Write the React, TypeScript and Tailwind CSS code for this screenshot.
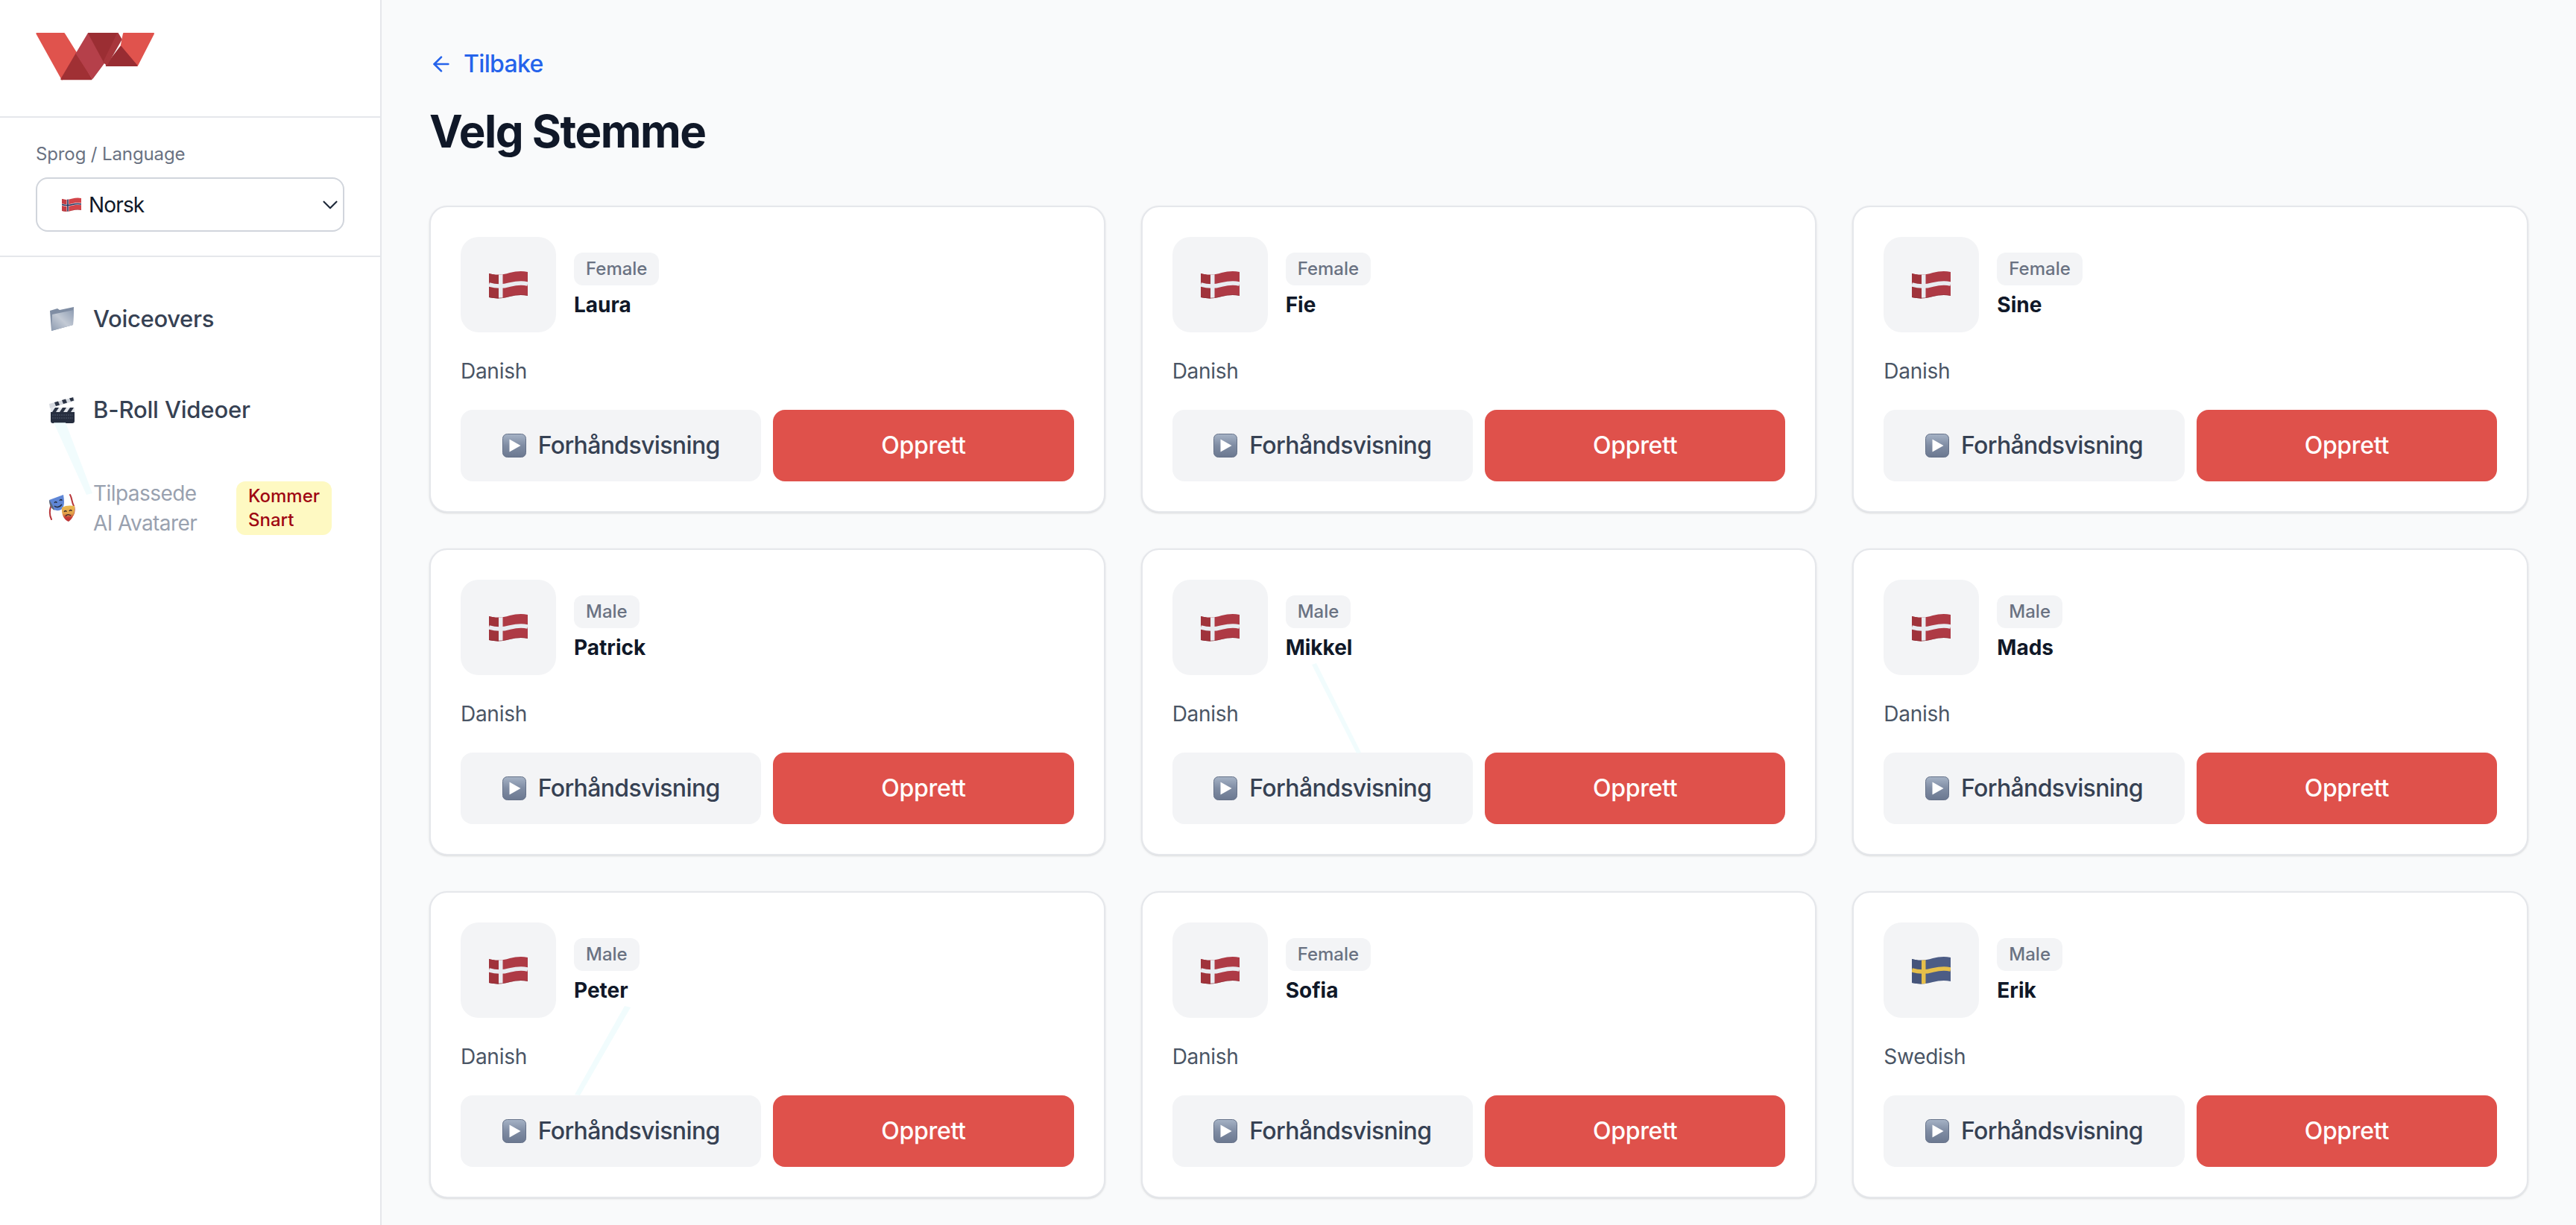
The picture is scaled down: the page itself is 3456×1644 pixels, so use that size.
import React from "react";
import { ArrowLeft, ChevronDown } from "lucide-react";

const FLAG_TOP = "M0 4C10 7 18 6 28 3C36 1 44 0 52 2L52 34C44 32 36 33 28 35C18 38 10 38 0 36Z";
const H_BAR = "M0 19C10 22 18 22 28 19C36 17 44 16 52 18";

function WaveFlag({ kind, className }: { kind: "dk" | "se" | "no"; className: string }) {
  const id = "flag-clip-" + kind;
  const bg = kind === "se" ? "#4c5c85" : kind === "dk" ? "#ae3a45" : "#d3454a";
  const cross = kind === "se" ? "#e6bf4a" : "#e9ebf0";
  return (
    <svg viewBox="0 0 52 38" className={className}>
      <defs>
        <clipPath id={id}>
          <path d={FLAG_TOP} />
        </clipPath>
      </defs>
      <g clipPath={`url(#${id})`}>
        <rect width="52" height="38" fill={bg} />
        <rect x="0" y="0" width="13" height="38" fill={kind === "se" ? "#46557a" : kind === "dk" ? "#a0333b" : "#c53e44"} />
        <rect x="13" y="0" width="5.5" height="38" fill={cross} />
        <path d={H_BAR} stroke={cross} strokeWidth="5.5" fill="none" />
        {kind === "no" && (
          <>
            <rect x="14.3" y="0" width="3" height="38" fill="#26335c" />
            <path d={H_BAR} stroke="#26335c" strokeWidth="3" fill="none" />
          </>
        )}
        <path d="M0 36C10 38 18 38 28 35C36 33 44 32 52 34" stroke="#7c2730" strokeOpacity={kind === "se" ? 0 : 0.5} strokeWidth="1.5" fill="none" />
      </g>
    </svg>
  );
}

function PlayIcon() {
  return (
    <svg viewBox="0 0 32 32" className="h-8 w-8 shrink-0">
      <defs>
        <linearGradient id="play-grad" x1="0" y1="0" x2="0" y2="1">
          <stop offset="0" stopColor="#a6b3c6" />
          <stop offset="0.5" stopColor="#7f8ca3" />
          <stop offset="1" stopColor="#6b7890" />
        </linearGradient>
      </defs>
      <rect x="0.5" y="0.5" width="31" height="31" rx="6" fill="url(#play-grad)" stroke="#667289" />
      <path d="M9.5 7.5L24.5 16L9.5 24.5Z" fill="#ffffff" />
    </svg>
  );
}

function FolderIcon() {
  return (
    <svg viewBox="0 0 34 34" className="h-[34px] w-[34px]">
      <defs>
        <linearGradient id="folder-grad" x1="0" y1="1" x2="1" y2="0">
          <stop offset="0" stopColor="#8d9bb0" />
          <stop offset="0.5" stopColor="#c3cad5" />
          <stop offset="1" stopColor="#8f9db3" />
        </linearGradient>
      </defs>
      <path d="M1 6L11 3L14 5L33 1L32 25L3 33Z" fill="#7f8da3" />
      <path d="M4 11L33 5L32 25L3 33Z" fill="url(#folder-grad)" />
    </svg>
  );
}

function ClapperIcon() {
  return (
    <svg viewBox="0 0 36 36" className="h-9 w-9">
      <path d="M1 10L34 1L35 6L2 16Z" fill="#d5d9e0" />
      <path d="M8 8L13 6.5L15 11.5L10 13ZM18 5L23 3.5L25 8.5L20 10ZM28 2.5L33 1.2L34 5.5L30 6.8Z" fill="#2b3344" />
      <rect x="3" y="15" width="32" height="6" fill="#e4e7ec" />
      <path d="M5 21L9 15H14L10 21ZM15 21L19 15H24L20 21ZM25 21L29 15H34L30 21Z" fill="#2b3344" />
      <path d="M3 21H35V33Q35 36 32 36H6Q3 36 3 33Z" fill="#262e3f" />
      <path d="M5 25H33M5 29H33" stroke="#4a5468" strokeWidth="1" strokeDasharray="2 1" />
    </svg>
  );
}

function MasksIcon() {
  return (
    <svg viewBox="0 0 36 38" className="h-[38px] w-9">
      <defs>
        <linearGradient id="mask-grad" x1="0" y1="0" x2="0" y2="1">
          <stop offset="0" stopColor="#e9bb52" />
          <stop offset="0.5" stopColor="#e3a24a" />
          <stop offset="0.75" stopColor="#c63c38" />
          <stop offset="1" stopColor="#b83234" />
        </linearGradient>
      </defs>
      <path d="M3 17C1 24 2 30 4 34" stroke="#b8363a" strokeWidth="2" fill="none" strokeLinecap="round" />
      <path d="M29 1C32 6 31 11 34 16C35 20 35 24 33 28" stroke="#b8363a" strokeWidth="2" fill="none" strokeLinecap="round" />
      <path d="M1 8L20 1C21 8 22 14 19 19C15 24 7 23 3 17Z" fill="#5f86d6" />
      <path d="M1 8C1 13 2 18 8 22C6 16 4 12 1 8Z" fill="#5f6673" />
      <path d="M8 12C9 10 11 10 11 12M15 9C16 7 18 7 18 9M8 16C11 19 16 17 18 14" stroke="#242b3a" strokeWidth="1.4" fill="none" />
      <path d="M18 18C23 15 30 15 35 16C36 25 33 33 27 37C21 35 17 27 18 18Z" fill="url(#mask-grad)" />
      <path d="M21 24C22 22 24 22 24 24M28 23C29 21 31 21 31 23M23 30C24 27 28 27 30 29" stroke="#3b2a2a" strokeWidth="1.4" fill="none" />
    </svg>
  );
}

function Logo() {
  return (
    <svg viewBox="54 72 480 192" className="h-16 w-40">
      <g strokeLinejoin="round" strokeWidth="6">
        <path d="M58 75L168 75L218 155L160 259Z" fill="#e0534d" stroke="#e0534d" />
        <path d="M218 155L157 259H278Z" fill="#a03034" stroke="#a03034" />
        <path d="M218 155L266 75L330 190L282 255Z" fill="#b5404a" stroke="#b5404a" />
        <path d="M268 75H382L330 190Z" fill="#9b2e33" stroke="#9b2e33" />
        <path d="M408 75L528 75L462 204L398 125Z" fill="#e0534d" stroke="#e0534d" />
        <path d="M396 128L338 204H460Z" fill="#982c32" stroke="#982c32" />
        <path d="M384 75L398 98L340 200L328 190Z" fill="#a7363c" stroke="#a7363c" />
      </g>
    </svg>
  );
}

function NavItem({ icon, children, extra }: { icon: React.ReactNode; children: React.ReactNode; extra?: React.ReactNode }) {
  return (
    <div className="flex items-center py-[23px] pl-4">
      <div className="flex h-[60px] w-[37px] shrink-0 items-center justify-center">{icon}</div>
      <div className="ml-6 min-w-0">{children}</div>
      {extra}
    </div>
  );
}

function Sidebar() {
  return (
    <aside className="flex h-full w-[512px] shrink-0 flex-col border-r-2 border-gray-200 bg-white">
      <div className="border-b-2 border-gray-200 px-12 pt-11 pb-12">
        <Logo />
      </div>
      <div className="border-b-2 border-gray-200 px-12 pt-[33px] pb-8">
        <div className="mb-[15px] text-[24px] leading-8 tracking-[-0.005em] text-gray-500">Sprog / Language</div>
        <div className="flex h-[73px] w-[414px] items-center rounded-2xl border-2 border-gray-300 bg-white pl-[33px]">
          <WaveFlag kind="no" className="h-[19px] w-[26px]" />
          <span className="ml-[10px] flex-1 text-[28px] leading-10 tracking-[-0.03em] text-gray-900">Norsk</span>
          <ChevronDown className="h-[34px] w-[34px] text-gray-800" strokeWidth={1.5} />
        </div>
      </div>
      <nav className="flex flex-col gap-4 pt-[30px] pl-12">
        <NavItem icon={<FolderIcon />}>
          <span className="text-[31px] leading-10 font-medium tracking-[-0.01em] text-gray-700">Voiceovers</span>
        </NavItem>
        <NavItem icon={<ClapperIcon />}>
          <span className="text-[31px] leading-10 font-medium tracking-[-0.005em] text-gray-700">B-Roll Videoer</span>
        </NavItem>
        <NavItem
          icon={<MasksIcon />}
          extra={
            <span className="ml-[40px] rounded-xl bg-yellow-100 px-4 py-1 text-[24px] leading-8 font-medium text-red-800">
              Kommer
              <br />
              Snart
            </span>
          }
        >
          <span className="block w-[152px] text-[28px] leading-10 tracking-[-0.02em] whitespace-nowrap text-gray-400">
            Tilpassede
            <br />
            AI Avatarer
          </span>
        </NavItem>
      </nav>
    </aside>
  );
}

type Voice = { name: string; gender: string; lang: string; flag: "dk" | "se" };

const voices: Voice[] = [
  { name: "Laura", gender: "Female", lang: "Danish", flag: "dk" },
  { name: "Fie", gender: "Female", lang: "Danish", flag: "dk" },
  { name: "Sine", gender: "Female", lang: "Danish", flag: "dk" },
  { name: "Patrick", gender: "Male", lang: "Danish", flag: "dk" },
  { name: "Mikkel", gender: "Male", lang: "Danish", flag: "dk" },
  { name: "Mads", gender: "Male", lang: "Danish", flag: "dk" },
  { name: "Peter", gender: "Male", lang: "Danish", flag: "dk" },
  { name: "Sofia", gender: "Female", lang: "Danish", flag: "dk" },
  { name: "Erik", gender: "Male", lang: "Swedish", flag: "se" },
];

function VoiceCard({ v }: { v: Voice }) {
  return (
    <div className="rounded-3xl border-2 border-gray-200 bg-white p-10 shadow-sm">
      <div className="flex items-center gap-6">
        <div className="flex h-32 w-32 shrink-0 items-center justify-center rounded-3xl bg-gray-100">
          <WaveFlag kind={v.flag} className="h-[38px] w-[52px]" />
        </div>
        <div className="pt-1">
          <span className="block w-fit rounded-xl bg-gray-100 px-4 py-[6px] text-[24px] leading-8 font-medium text-gray-500">
            {v.gender}
          </span>
          <div className="mt-[6px] text-[28px] leading-10 font-bold text-gray-900">{v.name}</div>
        </div>
      </div>
      <div className="mt-8 text-[28px] leading-10 tracking-[-0.01em] text-gray-600">{v.lang}</div>
      <div className="mt-8 grid grid-cols-2 gap-4">
        <div className="flex h-24 items-center justify-center gap-4 rounded-2xl bg-gray-100 text-[32px] leading-10 font-medium tracking-[-0.02em] text-gray-700">
          <PlayIcon />
          Forhåndsvisning
        </div>
        <div className="flex h-24 items-center justify-center rounded-2xl bg-[#df514b] text-[32px] leading-10 font-medium tracking-[-0.01em] text-white">
          Opprett
        </div>
      </div>
    </div>
  );
}

export default function App() {
  return (
    <div className="relative flex h-[1644px] w-full overflow-hidden bg-gray-50 font-['Inter',sans-serif]">
      <Sidebar />
      <main className="min-w-0 flex-1 px-16 pt-[66px]">
        <div className="flex items-center gap-[14px] text-[32px] leading-10 font-medium tracking-[-0.02em] text-[#2563eb]">
          <ArrowLeft className="h-8 w-8" strokeWidth={2} />
          Tilbake
        </div>
        <h1 className="mt-[34px] text-[60px] leading-[72px] font-bold tracking-[-0.025em] text-gray-900">Velg Stemme</h1>
        <div className="mt-16 grid grid-cols-3 gap-12">
          {voices.map((v) => (
            <VoiceCard key={v.name} v={v} />
          ))}
        </div>
      </main>
      <svg className="pointer-events-none absolute inset-0 h-[1644px] w-[3456px]" viewBox="0 0 3456 1644">
        <g fill="#ecfbfc" fillOpacity="0.75">
          <path d="M72 567L88 567L124 662L116 664Z" />
          <path d="M1760 892L1766 890L1826 1010L1820 1011Z" />
          <path d="M838 1350L846 1352L778 1470L771 1469Z" />
        </g>
      </svg>
    </div>
  );
}
